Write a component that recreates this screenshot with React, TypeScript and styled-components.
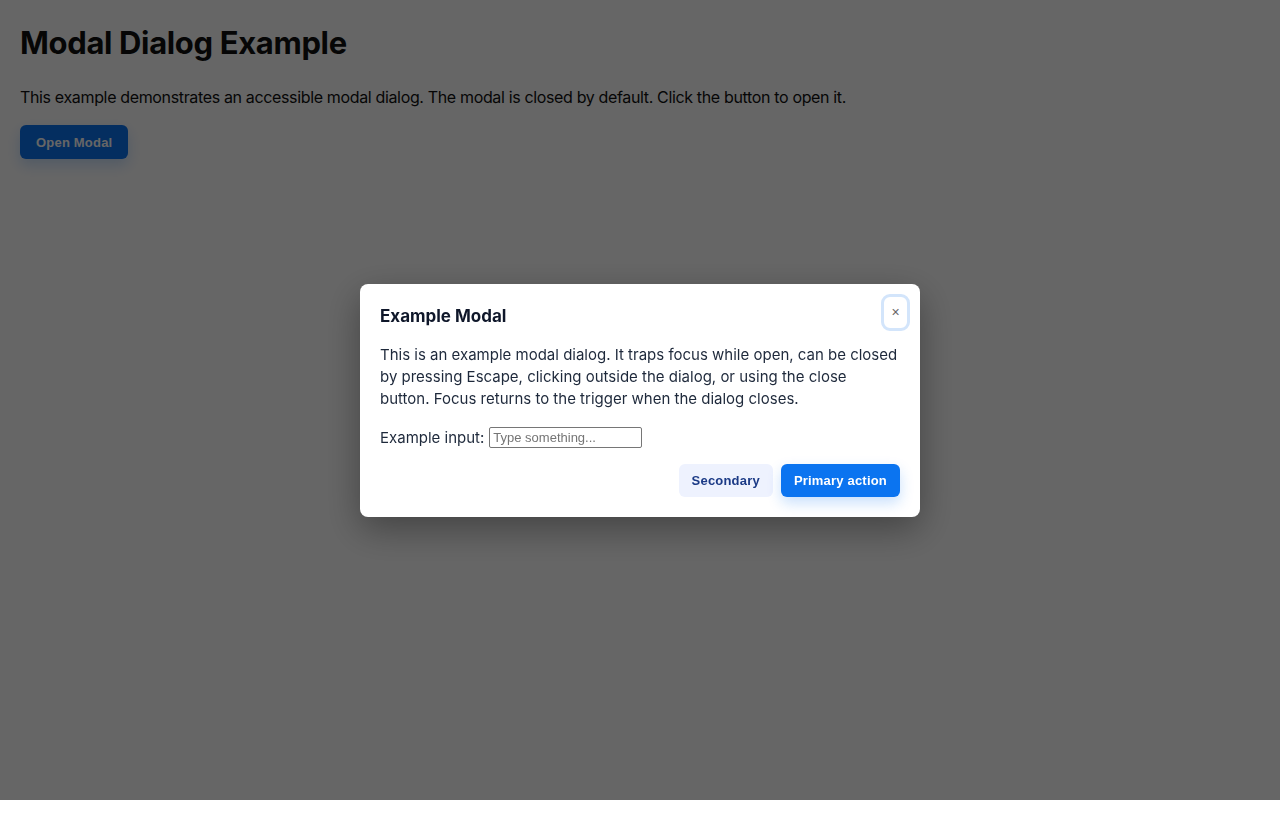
import styled, { createGlobalStyle } from "styled-components";

const GlobalStyle = createGlobalStyle`
  html, body {
    margin: 0;
    padding: 0;
    background: #fff;
  }
  body {
    font-family: Inter, "Noto Sans", sans-serif;
    color: #111;
  }
`;

const Page = styled.main`
  padding: 20px;
`;

const Heading = styled.h1`
  font-size: 31px;
  font-weight: 700;
  line-height: 38px;
  margin: 4px 0 23px;
  letter-spacing: -0.35px;
`;

const Intro = styled.p`
  font-size: 16px;
  line-height: 24px;
  margin: 0 0 16px;
  letter-spacing: -0.35px;
`;

const ActionButton = styled.button<{ $variant?: "primary" | "secondary" }>`
  height: 33px;
  padding: 0 13px;
  border: none;
  border-radius: 6px;
  font-family: "Liberation Sans", Arial, sans-serif;
  font-size: 13px;
  font-weight: 700;
  letter-spacing: 0.2px;
  cursor: pointer;
  background: ${(p) => (p.$variant === "secondary" ? "#eef2fe" : "#0b74f0")};
  color: ${(p) => (p.$variant === "secondary" ? "#1b3a86" : "#fff")};
  box-shadow: ${(p) =>
    p.$variant === "secondary" ? "none" : "0 6px 14px rgba(11, 116, 240, 0.22)"};
`;

const OpenButton = styled(ActionButton)`
  height: 34px;
  padding: 0 16px;
`;

const Overlay = styled.div`
  position: fixed;
  top: 0;
  left: 0;
  width: 100%;
  height: 800px;
  background: rgba(0, 0, 0, 0.6);
  display: flex;
  align-items: center;
  justify-content: center;
`;

const Dialog = styled.div`
  position: relative;
  width: 560px;
  box-sizing: border-box;
  padding: 20px;
  background: #fff;
  border-radius: 8px;
  box-shadow: 0 12px 36px rgba(0, 0, 0, 0.35);
  color: #1e293b;
`;

const Title = styled.h2`
  margin: 0 0 16px;
  font-size: 17px;
  line-height: 24px;
  font-weight: 700;
  color: #0f172a;
`;

const Body = styled.p`
  margin: 0 0 17px;
  font-size: 15px;
  line-height: 22px;
`;

const Field = styled.label`
  display: flex;
  align-items: center;
  gap: 5px;
  font-size: 15px;
  line-height: 21px;
`;

const TextInput = styled.input`
  width: 153px;
  height: 21px;
  box-sizing: border-box;
  padding: 1px 3px;
  border: 1px solid #767676;
  border-radius: 2px;
  font-family: "Liberation Sans", Arial, sans-serif;
  font-size: 13px;
  color: #222;

  &::placeholder {
    color: #757575;
  }
`;

const Footer = styled.div`
  display: flex;
  justify-content: flex-end;
  gap: 8px;
  margin-top: 16px;
`;

const CloseButton = styled.button`
  position: absolute;
  top: 10px;
  right: 10px;
  width: 29px;
  height: 37px;
  padding: 0;
  border: 3px solid #d3e5fb;
  border-radius: 9px;
  background: #fff;
  color: #666;
  font-family: "Liberation Sans", Arial, sans-serif;
  font-size: 14px;
  font-weight: 400;
  line-height: 1;
  cursor: pointer;
`;

export default function App() {
  return (
    <>
      <GlobalStyle />
      <Page>
        <Heading>Modal Dialog Example</Heading>
        <Intro>
          This example demonstrates an accessible modal dialog. The modal is
          closed by default. Click the button to open it.
        </Intro>
        <OpenButton>Open Modal</OpenButton>
      </Page>
      <Overlay>
        <Dialog role="dialog" aria-modal="true" aria-labelledby="modal-title">
          <CloseButton aria-label="Close">×</CloseButton>
          <Title id="modal-title">Example Modal</Title>
          <Body>
            This is an example modal dialog. It traps focus while open, can be
            closed by pressing Escape, clicking outside the dialog, or using the
            close button. Focus returns to the trigger when the dialog closes.
          </Body>
          <Field>
            Example input:
            <TextInput placeholder="Type something..." />
          </Field>
          <Footer>
            <ActionButton $variant="secondary">Secondary</ActionButton>
            <ActionButton>Primary action</ActionButton>
          </Footer>
        </Dialog>
      </Overlay>
    </>
  );
}
